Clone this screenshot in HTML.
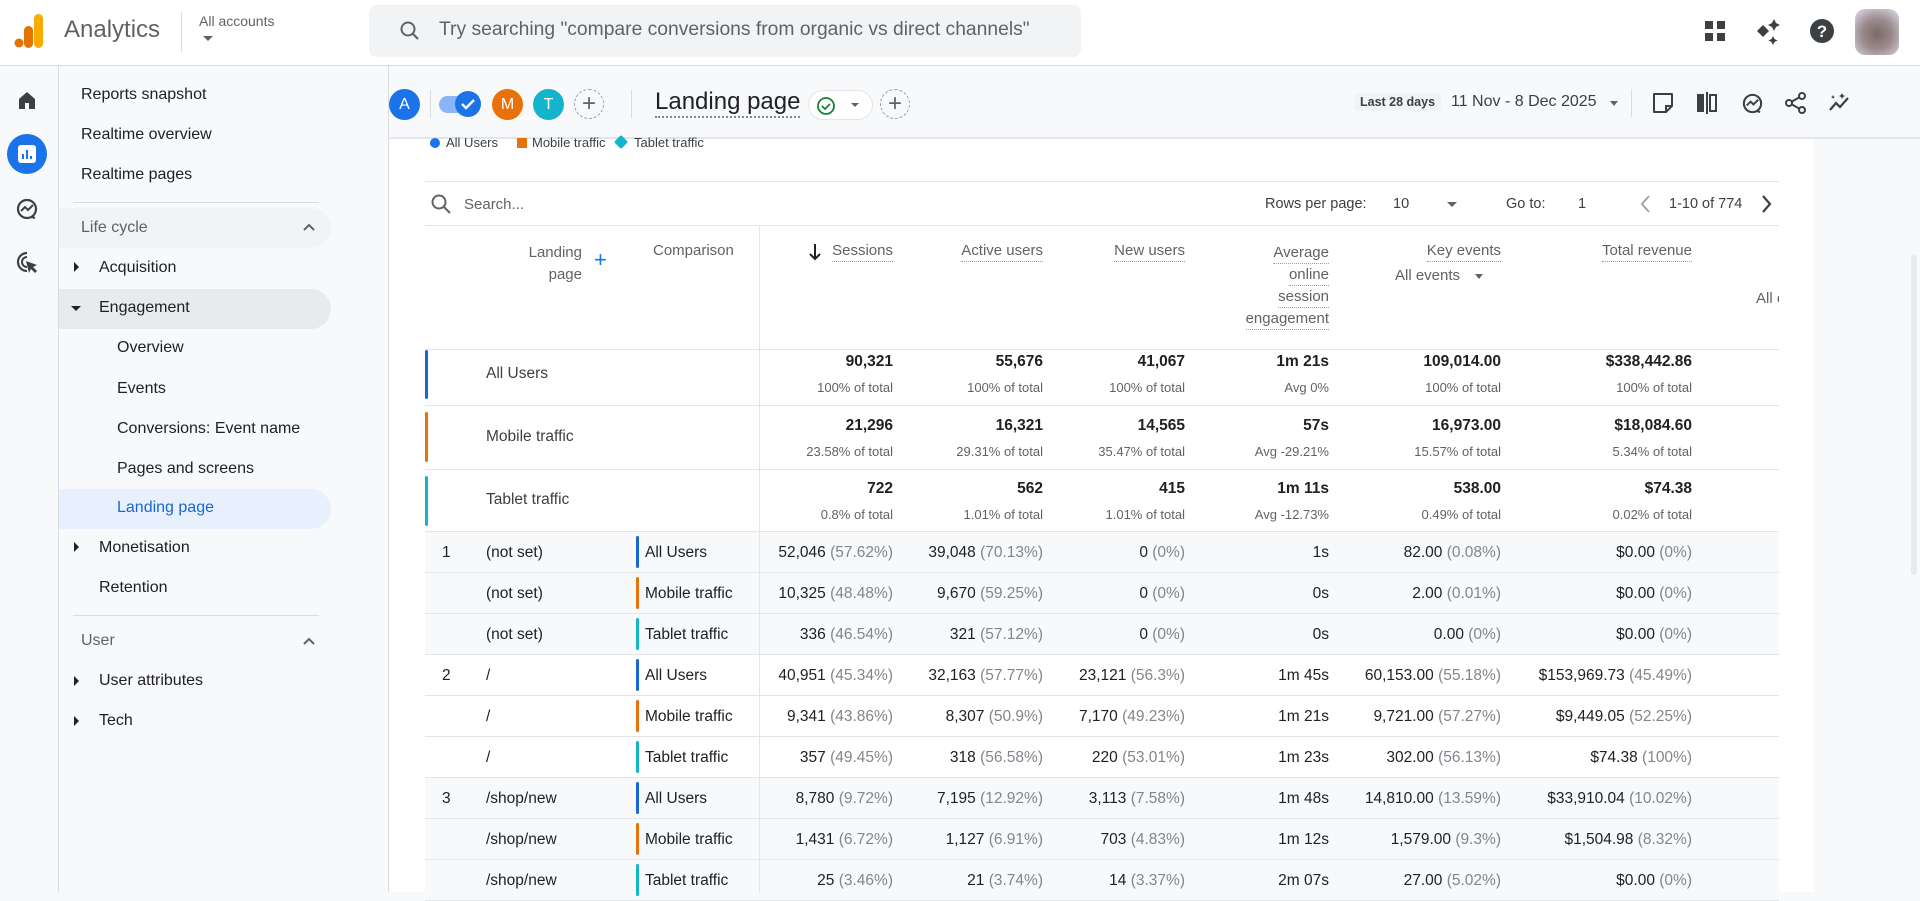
<!DOCTYPE html>
<html><head><meta charset="utf-8"><style>
*{box-sizing:border-box;margin:0;padding:0}
body{width:1920px;height:892px;overflow:hidden;background:#f8f9fa;font-family:"Liberation Sans",Arial,sans-serif;color:#202124;position:relative}
.a{position:absolute;white-space:nowrap}
.nav{font-size:16px;color:#202124}
.sub{color:#5f6368}
.c{position:absolute;width:220px;text-align:right;white-space:nowrap}
.row{position:absolute;left:425px;width:1354px;height:41px;border-bottom:1px solid #e3e5e8;font-size:15.5px}
.row .v{top:12px}
.g{color:#80868b}
.bar{position:absolute;width:3px;border-radius:2px}
.hd{font-size:15px;color:#5f6368;border-bottom:1.5px dotted #9aa0a6;padding-bottom:2px}
</style></head><body>
<!-- top bar -->
<div class="a" style="left:0;top:0;width:1920px;height:66px;background:#fff;border-bottom:1px solid #dadce0"></div>
<svg class="a" style="left:14px;top:14px" width="30" height="34" viewBox="0 0 30 34"><rect x="20" y="0" width="9" height="34" rx="4.5" fill="#f9ab00"/><rect x="10" y="12" width="9" height="22" rx="4.5" fill="#e37400"/><circle cx="5" cy="29" r="4.5" fill="#e37400"/></svg>
<div class="a" style="left:64px;top:16px;font-size:24px;color:#5f6368">Analytics</div>
<div class="a" style="left:181px;top:12px;width:1px;height:40px;background:#dadce0"></div>
<div class="a" style="left:199px;top:13px;font-size:14px;color:#5f6368">All accounts</div>
<div class="a" style="left:203px;top:36px;width:0;height:0;border-left:5px solid transparent;border-right:5px solid transparent;border-top:5px solid #5f6368"></div>
<div class="a" style="left:369px;top:5px;width:712px;height:52px;background:#f1f3f4;border-radius:8px"></div>
<svg class="a" style="left:398px;top:19px" width="24" height="24" viewBox="0 0 24 24"><circle cx="10" cy="10" r="6.5" stroke="#5f6368" stroke-width="2" fill="none"/><path d="M15 15l5 5" stroke="#5f6368" stroke-width="2.2"/></svg>
<div class="a" style="left:439px;top:19px;font-size:19.3px;color:#5f6368">Try searching "compare conversions from organic vs direct channels"</div>
<svg class="a" style="left:1704px;top:20px" width="22" height="22"><rect x="1" y="1" width="8" height="8" fill="#3c4043"/><rect x="13" y="1" width="8" height="8" fill="#3c4043"/><rect x="1" y="13" width="8" height="8" fill="#3c4043"/><rect x="13" y="13" width="8" height="8" fill="#3c4043"/></svg>
<svg class="a" style="left:1754px;top:17px" width="28" height="28" viewBox="0 0 28 28"><path d="M9 8l6 6-6 6-6-6z" fill="#3c4043"/><path d="M20 2l2 4 4 2-4 2-2 4-2-4-4-2 4-2z" fill="#3c4043"/><path d="M19 19l1.5 3 3 1.5-3 1.5-1.5 3-1.5-3-3-1.5 3-1.5z" fill="#3c4043"/></svg>
<svg class="a" style="left:1809px;top:18px" width="26" height="26" viewBox="0 0 26 26"><circle cx="13" cy="13" r="12" fill="#3c4043"/><text x="13" y="19" font-size="17" font-weight="bold" fill="#fff" text-anchor="middle" font-family="Liberation Sans">?</text></svg>
<div class="a" style="left:1855px;top:9px;width:44px;height:46px;border-radius:10px;background:radial-gradient(circle at 50% 55%,#7a6a66 0%,#9a8a8c 45%,#c8c0cc 80%,#ece8f0 100%)"></div>

<!-- left rail -->
<div class="a" style="left:58px;top:66px;width:1px;height:826px;background:#dadce0"></div>
<svg class="a" style="left:16px;top:89px" width="22" height="22" viewBox="0 0 22 22"><path d="M3 10L11 3l8 7v10h-6v-6H9v6H3z" fill="#3c4043"/></svg>
<div class="a" style="left:7px;top:134px;width:40px;height:40px;border-radius:50%;background:#1a73e8"></div>
<svg class="a" style="left:17px;top:144px" width="20" height="20"><rect x="1" y="1" width="18" height="18" rx="3" fill="#fff"/><rect x="5" y="10" width="2" height="5" fill="#1a73e8"/><rect x="9" y="6" width="2" height="9" fill="#1a73e8"/><rect x="13" y="12" width="2" height="3" fill="#1a73e8"/></svg>
<svg class="a" style="left:15px;top:197px" width="24" height="24" viewBox="0 0 24 24"><circle cx="12" cy="12" r="9" stroke="#3c4043" stroke-width="2.2" fill="none"/><path d="M6 14l4-4 3 3 5-5" stroke="#3c4043" stroke-width="2" fill="none"/><path d="M17 20l3 1" stroke="#3c4043" stroke-width="2"/></svg>
<svg class="a" style="left:15px;top:250px" width="24" height="24" viewBox="0 0 24 24"><path d="M12 3a9 9 0 1 0 0 18" stroke="#3c4043" stroke-width="2.2" fill="none"/><path d="M12 7a5 5 0 1 0 0 10" stroke="#3c4043" stroke-width="2" fill="none"/><path d="M11 11l11 4-4 2 4 4-2 2-4-4-2 4z" fill="#3c4043"/></svg>

<!-- nav -->
<div class="a" style="left:388px;top:66px;width:1px;height:826px;background:#dadce0"></div>
<div class="a nav" style="left:81px;top:86px">Reports snapshot</div>
<div class="a nav" style="left:81px;top:126px">Realtime overview</div>
<div class="a nav" style="left:81px;top:166px">Realtime pages</div>
<div class="a" style="left:73px;top:202px;width:246px;height:1px;background:#dadce0"></div>
<div class="a" style="left:59px;top:208px;width:272px;height:40px;border-radius:0 20px 20px 0;background:#f1f3f4"></div>
<div class="a nav sub" style="left:81px;top:219px">Life cycle</div>
<svg class="a" style="left:302px;top:222px" width="14" height="10"><path d="M2 8l5-5 5 5" stroke="#5f6368" stroke-width="2" fill="none"/></svg>
<div class="a" style="left:74px;top:262px;border-top:5px solid transparent;border-bottom:5px solid transparent;border-left:5px solid #202124"></div>
<div class="a nav" style="left:99px;top:259px">Acquisition</div>
<div class="a" style="left:59px;top:289px;width:272px;height:40px;border-radius:0 20px 20px 0;background:#e8eaed"></div>
<div class="a" style="left:71px;top:306px;border-left:5px solid transparent;border-right:5px solid transparent;border-top:5px solid #202124"></div>
<div class="a nav" style="left:99px;top:299px">Engagement</div>
<div class="a nav" style="left:117px;top:339px">Overview</div>
<div class="a nav" style="left:117px;top:380px">Events</div>
<div class="a nav" style="left:117px;top:420px">Conversions: Event name</div>
<div class="a nav" style="left:117px;top:460px">Pages and screens</div>
<div class="a" style="left:59px;top:489px;width:272px;height:40px;border-radius:0 20px 20px 0;background:#e8f0fe"></div>
<div class="a nav" style="left:117px;top:499px;color:#1967d2">Landing page</div>
<div class="a" style="left:74px;top:542px;border-top:5px solid transparent;border-bottom:5px solid transparent;border-left:5px solid #202124"></div>
<div class="a nav" style="left:99px;top:539px">Monetisation</div>
<div class="a nav" style="left:99px;top:579px">Retention</div>
<div class="a" style="left:73px;top:615px;width:246px;height:1px;background:#dadce0"></div>
<div class="a nav sub" style="left:81px;top:632px">User</div>
<svg class="a" style="left:302px;top:636px" width="14" height="10"><path d="M2 8l5-5 5 5" stroke="#5f6368" stroke-width="2" fill="none"/></svg>
<div class="a" style="left:74px;top:676px;border-top:5px solid transparent;border-bottom:5px solid transparent;border-left:5px solid #202124"></div>
<div class="a nav" style="left:99px;top:672px">User attributes</div>
<div class="a" style="left:74px;top:716px;border-top:5px solid transparent;border-bottom:5px solid transparent;border-left:5px solid #202124"></div>
<div class="a nav" style="left:99px;top:712px">Tech</div>

<!-- filter bar -->
<div class="a" style="left:389px;top:137px;width:1531px;height:2px;background:#e3e5e8"></div>
<div class="a" style="left:389px;top:139px;width:1425px;height:753px;background:#fff"></div>
<div class="a" style="left:389px;top:89px;width:31px;height:31px;border-radius:50%;background:#1a73e8;color:#fff;font-size:16px;text-align:center;line-height:31px">A</div>
<div class="a" style="left:430px;top:90px;width:1px;height:28px;background:#dadce0"></div>
<div class="a" style="left:439px;top:96px;width:38px;height:17px;border-radius:9px;background:#8ab4f8"></div>
<div class="a" style="left:455px;top:91px;width:26px;height:26px;border-radius:50%;background:#1a73e8"></div>
<svg class="a" style="left:459px;top:96px" width="18" height="16"><path d="M3 8l4 4 8-8" stroke="#fff" stroke-width="2.4" fill="none"/></svg>
<div class="a" style="left:492px;top:89px;width:31px;height:31px;border-radius:50%;background:#e8710a;color:#fff;font-size:16px;text-align:center;line-height:31px">M</div>
<div class="a" style="left:533px;top:89px;width:31px;height:31px;border-radius:50%;background:#12b5cb;color:#fff;font-size:16px;text-align:center;line-height:31px">T</div>
<div class="a" style="left:574px;top:89px;width:30px;height:30px;border-radius:50%;border:1px dashed #9aa0a6;color:#5f6368;font-size:24px;text-align:center;line-height:27px">+</div>
<div class="a" style="left:631px;top:90px;width:1px;height:28px;background:#dadce0"></div>
<div class="a" style="left:655px;top:88px;font-size:24px;color:#202124;border-bottom:2px dotted #80868b;line-height:28px">Landing page</div>
<div class="a" style="left:808px;top:90px;width:65px;height:30px;border-radius:15px;border:1px solid #e3e5e8;background:#fff"></div>
<svg class="a" style="left:816px;top:96px" width="20" height="20"><circle cx="10" cy="10" r="8" stroke="#188038" stroke-width="1.8" fill="none"/><path d="M6 10l3 3 5-5" stroke="#188038" stroke-width="1.8" fill="none"/></svg>
<div class="a" style="left:851px;top:103px;border-left:4px solid transparent;border-right:4px solid transparent;border-top:4px solid #5f6368"></div>
<div class="a" style="left:880px;top:89px;width:30px;height:30px;border-radius:50%;border:1px dashed #9aa0a6;color:#5f6368;font-size:24px;text-align:center;line-height:27px">+</div>
<div class="a" style="left:1354px;top:93px;padding:2px 6px;background:#f1f3f4;font-size:12.5px;font-weight:bold;color:#3c4043;border-radius:3px">Last 28 days</div>
<div class="a" style="left:1451px;top:93px;font-size:16px;color:#3c4043">11 Nov - 8 Dec 2025</div>
<div class="a" style="left:1610px;top:101px;border-left:4px solid transparent;border-right:4px solid transparent;border-top:5px solid #5f6368"></div>
<div class="a" style="left:1631px;top:89px;width:1px;height:28px;background:#dadce0"></div>
<svg class="a" style="left:1652px;top:92px" width="22" height="22"><path d="M2 2h18v12l-6 6H2z" stroke="#3c4043" stroke-width="2" fill="none" stroke-linejoin="round"/><path d="M14 20v-6h6" stroke="#3c4043" stroke-width="2" fill="none"/></svg>
<svg class="a" style="left:1696px;top:92px" width="22" height="22"><rect x="1" y="2" width="7" height="18" fill="#3c4043"/><rect x="10" y="0" width="2" height="22" fill="#3c4043"/><rect x="14" y="3" width="6" height="16" stroke="#3c4043" stroke-width="2" fill="none"/></svg>
<svg class="a" style="left:1741px;top:92px" width="23" height="23" viewBox="0 0 24 24"><circle cx="12" cy="12" r="9" stroke="#3c4043" stroke-width="2.2" fill="none"/><path d="M6 14l4-4 3 3 5-5" stroke="#3c4043" stroke-width="2" fill="none"/><path d="M17 20l3 1" stroke="#3c4043" stroke-width="2"/></svg>
<svg class="a" style="left:1785px;top:92px" width="22" height="22"><circle cx="17" cy="4" r="3" stroke="#3c4043" stroke-width="2" fill="none"/><circle cx="4" cy="11" r="3" stroke="#3c4043" stroke-width="2" fill="none"/><circle cx="17" cy="18" r="3" stroke="#3c4043" stroke-width="2" fill="none"/><path d="M7 9.5l7-4M7 12.5l7 4" stroke="#3c4043" stroke-width="2"/></svg>
<svg class="a" style="left:1828px;top:92px" width="24" height="22"><path d="M2 18l6-7 4 4 8-9" stroke="#3c4043" stroke-width="2.2" fill="none"/><path d="M14 1l1 2 2 1-2 1-1 2-1-2-2-1 2-1zM5 3l.8 1.5L7 5l-1.2.6L5 7l-.7-1.4L3 5l1.3-.5z" fill="#3c4043"/></svg>

<!-- legend -->
<div class="a" style="left:430px;top:138px;width:10px;height:10px;border-radius:50%;background:#1a73e8"></div>
<div class="a" style="left:446px;top:135px;font-size:13px;color:#3c4043">All Users</div>
<div class="a" style="left:517px;top:138px;width:10px;height:10px;background:#e8710a"></div>
<div class="a" style="left:532px;top:135px;font-size:13px;color:#3c4043">Mobile traffic</div>
<div class="a" style="left:616px;top:137px;width:10px;height:10px;background:#12b5cb;transform:rotate(45deg);border-radius:2px"></div>
<div class="a" style="left:634px;top:135px;font-size:13px;color:#3c4043">Tablet traffic</div>

<!-- scrollbar -->
<div class="a" style="left:1911px;top:255px;width:6px;height:320px;border-radius:3px;background:#e8eaed"></div>

<!-- table toolbar -->
<div class="a" style="left:425px;top:181px;width:1354px;height:1px;background:#e3e5e8"></div>
<svg class="a" style="left:430px;top:193px" width="22" height="22"><circle cx="9" cy="9" r="6.5" stroke="#5f6368" stroke-width="2" fill="none"/><path d="M14 14l6 6" stroke="#5f6368" stroke-width="2"/></svg>
<div class="a" style="left:464px;top:196px;font-size:15px;color:#5f6368">Search...</div>
<div class="a" style="left:1265px;top:196px;font-size:14.5px;color:#3c4043">Rows per page:</div>
<div class="a" style="left:1393px;top:196px;font-size:14.5px;color:#3c4043">10</div>
<div class="a" style="left:1447px;top:202px;border-left:5px solid transparent;border-right:5px solid transparent;border-top:5px solid #5f6368"></div>
<div class="a" style="left:1506px;top:196px;font-size:14.5px;color:#3c4043">Go to:</div>
<div class="a" style="left:1578px;top:196px;font-size:14.5px;color:#3c4043">1</div>
<svg class="a" style="left:1640px;top:194px" width="12" height="20"><path d="M9 2l-7 8 7 8" stroke="#9aa0a6" stroke-width="1.8" fill="none"/></svg>
<div class="a" style="left:1669px;top:196px;font-size:14.5px;color:#3c4043">1-10 of 774</div>
<svg class="a" style="left:1760px;top:194px" width="12" height="20"><path d="M3 2l7 8-7 8" stroke="#3c4043" stroke-width="2.2" fill="none"/></svg>
<div class="a" style="left:425px;top:225px;width:1354px;height:1px;background:#e3e5e8"></div>

<!-- header -->
<div class="a" style="left:759px;top:226px;width:1px;height:666px;background:#e3e5e8"></div>
<div class="c" style="left:362px;top:242px;font-size:15px;color:#5f6368;line-height:22px">Landing<br>page</div>
<div class="a" style="left:594px;top:247px;font-size:22px;color:#1a73e8">+</div>
<div class="a" style="left:653px;top:242px;font-size:15px;color:#5f6368">Comparison</div>
<svg class="a" style="left:808px;top:243px" width="14" height="18"><path d="M7 1v15M2 11l5 5 5-5" stroke="#202124" stroke-width="2" fill="none"/></svg>
<div class="c" style="left:673px;top:242px"><span class="hd">Sessions</span></div>
<div class="c" style="left:823px;top:242px"><span class="hd">Active users</span></div>
<div class="c" style="left:965px;top:242px"><span class="hd">New users</span></div>
<div class="c" style="left:1109px;top:242px;line-height:22px"><span class="hd">Average</span><br><span class="hd">online</span><br><span class="hd">session</span><br><span class="hd">engagement</span></div>
<div class="c" style="left:1281px;top:242px"><span class="hd">Key events</span></div>
<div class="a" style="left:1395px;top:267px;font-size:15px;color:#5f6368">All events</div>
<div class="a" style="left:1475px;top:274px;border-left:4px solid transparent;border-right:4px solid transparent;border-top:5px solid #5f6368"></div>
<div class="c" style="left:1472px;top:242px"><span class="hd">Total revenue</span></div>
<div class="a" style="left:1756px;top:290px;font-size:15px;color:#5f6368;width:23px;overflow:hidden">All e</div>

<!-- summary rows -->
<div class="a" style="left:425px;top:349px;width:1354px;height:1px;background:#e3e5e8"></div>
<div class="a" style="left:425px;top:405px;width:1354px;height:1px;background:#e3e5e8"></div>
<div class="a" style="left:425px;top:469px;width:1354px;height:1px;background:#e3e5e8"></div>
<div class="a" style="left:425px;top:531px;width:1354px;height:1px;background:#e3e5e8"></div>
<div class="bar" style="left:425px;top:350px;height:49px;background:#1967d2"></div>
<div class="bar" style="left:425px;top:412px;height:50px;background:#e8710a"></div>
<div class="bar" style="left:425px;top:476px;height:50px;background:#12b5cb"></div>
<div class="a" style="left:486px;top:365px;font-size:15.5px;color:#3c4043">All Users</div>
<div class="a" style="left:486px;top:428px;font-size:15.5px;color:#3c4043">Mobile traffic</div>
<div class="a" style="left:486px;top:491px;font-size:15.5px;color:#3c4043">Tablet traffic</div>

<div style="font-size:15.5px;font-weight:bold;color:#202124">
<div class="c" style="left:673px;top:353px">90,321</div><div class="c" style="left:823px;top:353px">55,676</div><div class="c" style="left:965px;top:353px">41,067</div><div class="c" style="left:1109px;top:353px">1m 21s</div><div class="c" style="left:1281px;top:353px">109,014.00</div><div class="c" style="left:1472px;top:353px">$338,442.86</div>
<div class="c" style="left:673px;top:417px">21,296</div><div class="c" style="left:823px;top:417px">16,321</div><div class="c" style="left:965px;top:417px">14,565</div><div class="c" style="left:1109px;top:417px">57s</div><div class="c" style="left:1281px;top:417px">16,973.00</div><div class="c" style="left:1472px;top:417px">$18,084.60</div>
<div class="c" style="left:673px;top:480px">722</div><div class="c" style="left:823px;top:480px">562</div><div class="c" style="left:965px;top:480px">415</div><div class="c" style="left:1109px;top:480px">1m 11s</div><div class="c" style="left:1281px;top:480px">538.00</div><div class="c" style="left:1472px;top:480px">$74.38</div>
</div>
<div style="font-size:13px;color:#5f6368">
<div class="c" style="left:673px;top:380px">100% of total</div><div class="c" style="left:823px;top:380px">100% of total</div><div class="c" style="left:965px;top:380px">100% of total</div><div class="c" style="left:1109px;top:380px">Avg 0%</div><div class="c" style="left:1281px;top:380px">100% of total</div><div class="c" style="left:1472px;top:380px">100% of total</div>
<div class="c" style="left:673px;top:444px">23.58% of total</div><div class="c" style="left:823px;top:444px">29.31% of total</div><div class="c" style="left:965px;top:444px">35.47% of total</div><div class="c" style="left:1109px;top:444px">Avg -29.21%</div><div class="c" style="left:1281px;top:444px">15.57% of total</div><div class="c" style="left:1472px;top:444px">5.34% of total</div>
<div class="c" style="left:673px;top:507px">0.8% of total</div><div class="c" style="left:823px;top:507px">1.01% of total</div><div class="c" style="left:965px;top:507px">1.01% of total</div><div class="c" style="left:1109px;top:507px">Avg -12.73%</div><div class="c" style="left:1281px;top:507px">0.49% of total</div><div class="c" style="left:1472px;top:507px">0.02% of total</div>
</div>

<div class="row" style="top:532px;background:#f8f9fa"><span class="a v" style="left:17px">1</span><span class="a v" style="left:61px">(not set)</span><div class="bar" style="left:211px;top:4px;height:32px;background:#1967d2"></div><span class="a v" style="left:220px">All Users</span><span class="c v" style="left:248px">52,046 <span class="g">(57.62%)</span></span><span class="c v" style="left:398px">39,048 <span class="g">(70.13%)</span></span><span class="c v" style="left:540px">0 <span class="g">(0%)</span></span><span class="c v" style="left:684px">1s</span><span class="c v" style="left:856px">82.00 <span class="g">(0.08%)</span></span><span class="c v" style="left:1047px">$0.00 <span class="g">(0%)</span></span></div>
<div class="row" style="top:573px;background:#f8f9fa"><span class="a v" style="left:61px">(not set)</span><div class="bar" style="left:211px;top:4px;height:32px;background:#e8710a"></div><span class="a v" style="left:220px">Mobile traffic</span><span class="c v" style="left:248px">10,325 <span class="g">(48.48%)</span></span><span class="c v" style="left:398px">9,670 <span class="g">(59.25%)</span></span><span class="c v" style="left:540px">0 <span class="g">(0%)</span></span><span class="c v" style="left:684px">0s</span><span class="c v" style="left:856px">2.00 <span class="g">(0.01%)</span></span><span class="c v" style="left:1047px">$0.00 <span class="g">(0%)</span></span></div>
<div class="row" style="top:614px;background:#f8f9fa"><span class="a v" style="left:61px">(not set)</span><div class="bar" style="left:211px;top:4px;height:32px;background:#12b5cb"></div><span class="a v" style="left:220px">Tablet traffic</span><span class="c v" style="left:248px">336 <span class="g">(46.54%)</span></span><span class="c v" style="left:398px">321 <span class="g">(57.12%)</span></span><span class="c v" style="left:540px">0 <span class="g">(0%)</span></span><span class="c v" style="left:684px">0s</span><span class="c v" style="left:856px">0.00 <span class="g">(0%)</span></span><span class="c v" style="left:1047px">$0.00 <span class="g">(0%)</span></span></div>
<div class="row" style="top:655px;background:#fff"><span class="a v" style="left:17px">2</span><span class="a v" style="left:61px">/</span><div class="bar" style="left:211px;top:4px;height:32px;background:#1967d2"></div><span class="a v" style="left:220px">All Users</span><span class="c v" style="left:248px">40,951 <span class="g">(45.34%)</span></span><span class="c v" style="left:398px">32,163 <span class="g">(57.77%)</span></span><span class="c v" style="left:540px">23,121 <span class="g">(56.3%)</span></span><span class="c v" style="left:684px">1m 45s</span><span class="c v" style="left:856px">60,153.00 <span class="g">(55.18%)</span></span><span class="c v" style="left:1047px">$153,969.73 <span class="g">(45.49%)</span></span></div>
<div class="row" style="top:696px;background:#fff"><span class="a v" style="left:61px">/</span><div class="bar" style="left:211px;top:4px;height:32px;background:#e8710a"></div><span class="a v" style="left:220px">Mobile traffic</span><span class="c v" style="left:248px">9,341 <span class="g">(43.86%)</span></span><span class="c v" style="left:398px">8,307 <span class="g">(50.9%)</span></span><span class="c v" style="left:540px">7,170 <span class="g">(49.23%)</span></span><span class="c v" style="left:684px">1m 21s</span><span class="c v" style="left:856px">9,721.00 <span class="g">(57.27%)</span></span><span class="c v" style="left:1047px">$9,449.05 <span class="g">(52.25%)</span></span></div>
<div class="row" style="top:737px;background:#fff"><span class="a v" style="left:61px">/</span><div class="bar" style="left:211px;top:4px;height:32px;background:#12b5cb"></div><span class="a v" style="left:220px">Tablet traffic</span><span class="c v" style="left:248px">357 <span class="g">(49.45%)</span></span><span class="c v" style="left:398px">318 <span class="g">(56.58%)</span></span><span class="c v" style="left:540px">220 <span class="g">(53.01%)</span></span><span class="c v" style="left:684px">1m 23s</span><span class="c v" style="left:856px">302.00 <span class="g">(56.13%)</span></span><span class="c v" style="left:1047px">$74.38 <span class="g">(100%)</span></span></div>
<div class="row" style="top:778px;background:#f8f9fa"><span class="a v" style="left:17px">3</span><span class="a v" style="left:61px">/shop/new</span><div class="bar" style="left:211px;top:4px;height:32px;background:#1967d2"></div><span class="a v" style="left:220px">All Users</span><span class="c v" style="left:248px">8,780 <span class="g">(9.72%)</span></span><span class="c v" style="left:398px">7,195 <span class="g">(12.92%)</span></span><span class="c v" style="left:540px">3,113 <span class="g">(7.58%)</span></span><span class="c v" style="left:684px">1m 48s</span><span class="c v" style="left:856px">14,810.00 <span class="g">(13.59%)</span></span><span class="c v" style="left:1047px">$33,910.04 <span class="g">(10.02%)</span></span></div>
<div class="row" style="top:819px;background:#f8f9fa"><span class="a v" style="left:61px">/shop/new</span><div class="bar" style="left:211px;top:4px;height:32px;background:#e8710a"></div><span class="a v" style="left:220px">Mobile traffic</span><span class="c v" style="left:248px">1,431 <span class="g">(6.72%)</span></span><span class="c v" style="left:398px">1,127 <span class="g">(6.91%)</span></span><span class="c v" style="left:540px">703 <span class="g">(4.83%)</span></span><span class="c v" style="left:684px">1m 12s</span><span class="c v" style="left:856px">1,579.00 <span class="g">(9.3%)</span></span><span class="c v" style="left:1047px">$1,504.98 <span class="g">(8.32%)</span></span></div>
<div class="row" style="top:860px;background:#f8f9fa"><span class="a v" style="left:61px">/shop/new</span><div class="bar" style="left:211px;top:4px;height:32px;background:#12b5cb"></div><span class="a v" style="left:220px">Tablet traffic</span><span class="c v" style="left:248px">25 <span class="g">(3.46%)</span></span><span class="c v" style="left:398px">21 <span class="g">(3.74%)</span></span><span class="c v" style="left:540px">14 <span class="g">(3.37%)</span></span><span class="c v" style="left:684px">2m 07s</span><span class="c v" style="left:856px">27.00 <span class="g">(5.02%)</span></span><span class="c v" style="left:1047px">$0.00 <span class="g">(0%)</span></span></div>
<div class="a" style="left:759px;top:532px;width:1px;height:360px;background:#e3e5e8"></div>
</body></html>
